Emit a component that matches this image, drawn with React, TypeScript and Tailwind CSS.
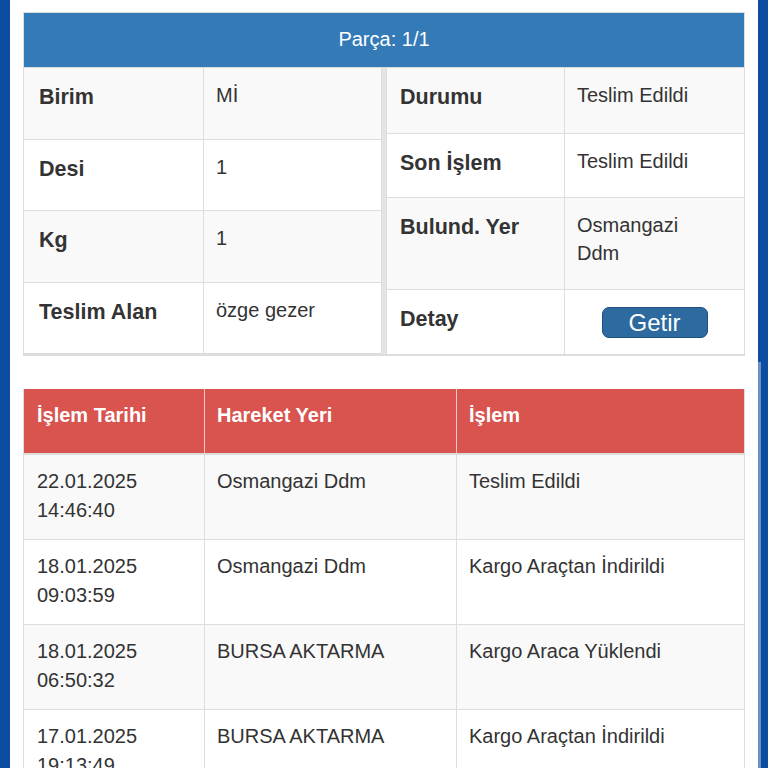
const info = {
  left: [
    { label: "Birim", value: "Mİ", h: "h-[72px]" },
    { label: "Desi", value: "1", h: "h-[71px]" },
    { label: "Kg", value: "1", h: "h-[72px]" },
    { label: "Teslim Alan", value: "özge gezer", h: "h-[71px]" },
  ],
  right: [
    { label: "Durumu", value: "Teslim Edildi", h: "h-[66px]" },
    { label: "Son İşlem", value: "Teslim Edildi", h: "h-[64px]" },
    { label: "Bulund. Yer", value: "Osmangazi Ddm", h: "h-[92px]" },
  ],
};

const history = [
  { date: "22.01.2025", time: "14:46:40", place: "Osmangazi Ddm", action: "Teslim Edildi" },
  { date: "18.01.2025", time: "09:03:59", place: "Osmangazi Ddm", action: "Kargo Araçtan İndirildi" },
  { date: "18.01.2025", time: "06:50:32", place: "BURSA AKTARMA", action: "Kargo Araca Yüklendi" },
  { date: "17.01.2025", time: "19:13:49", place: "BURSA AKTARMA", action: "Kargo Araçtan İndirildi" },
];

const InfoRow = ({
  label,
  children,
  h,
  striped,
  labelCls,
}: {
  label: string;
  children: React.ReactNode;
  h: string;
  striped: boolean;
  labelCls: string;
}) => (
  <div className={`flex border-b border-[#ddd] ${h} ${striped ? "bg-[#f9f9f9]" : "bg-white"}`}>
    <div className={`${labelCls} shrink-0 border-r border-[#ddd] pt-[14px] text-[21.5px] font-bold leading-[30px]`}>
      {label}
    </div>
    <div className="flex-1 pl-[12px] pr-3 pt-[13px] text-[20px] leading-[28px]">{children}</div>
  </div>
);

const App = () => {
  return (
    <div
      className="flex min-h-screen bg-white text-[#333]"
      style={{ fontFamily: '"Liberation Sans", Arial, sans-serif' }}
    >
      <div className="w-[10px] shrink-0 bg-[#0b4d9e]" />

      <main className="flex-1 px-[13px] pt-[12px]">
        {/* parça bilgileri */}
        <section className="border border-b-2 border-[#ddd]">
          <div className="flex h-[55px] items-center justify-center border-b border-[#ddd] bg-[#337ab7] pb-[2px] text-[20px] text-white">
            Parça: 1/1
          </div>
          <div className="flex gap-[4px] bg-[#e4e4e4]">
            <div className="flex-1 border-r border-[#ddd]">
              {info.left.map((r, i) => (
                <InfoRow key={r.label} label={r.label} h={r.h} striped={i % 2 === 0} labelCls="w-[180px] pl-[15px]">
                  {r.value}
                </InfoRow>
              ))}
            </div>
            <div className="flex-1 border-l border-[#ddd]">
              {info.right.map((r, i) => (
                <InfoRow key={r.label} label={r.label} h={r.h} striped={i % 2 === 0} labelCls="w-[178px] pl-[13px]">
                  {r.label === "Bulund. Yer" ? (
                    <>
                      Osmangazi
                      <br />
                      Ddm
                    </>
                  ) : (
                    r.value
                  )}
                </InfoRow>
              ))}
              <div className="flex h-[64px] bg-white">
                <div className="w-[178px] shrink-0 border-r border-[#ddd] pl-[13px] pt-[14px] text-[21.5px] font-bold leading-[30px]">
                  Detay
                </div>
                <div className="flex flex-1 justify-center pt-[17px]">
                  <button className="flex h-[31px] w-[106px] items-center justify-center rounded-[7px] border border-[#1f4f7e] bg-[#2c6aa0] text-[24px] leading-none text-white">
                    Getir
                  </button>
                </div>
              </div>
            </div>
          </div>
        </section>

        {/* hareketler */}
        <section className="mt-[33px] grid grid-cols-[182px_252px_1fr]">
          <div className="h-[66px] border-b-2 border-l border-r border-[#ddd] border-r-[#f3c9c8] bg-[#d9534f] pl-[13px] pt-[12px] text-[20px] font-bold leading-[29px] text-white">
            İşlem Tarihi
          </div>
          <div className="h-[66px] border-b-2 border-r border-[#ddd] border-r-[#f3c9c8] bg-[#d9534f] pl-[12px] pt-[12px] text-[20px] font-bold leading-[29px] text-white">
            Hareket Yeri
          </div>
          <div className="h-[66px] border-b-2 border-r border-[#ddd] bg-[#d9534f] pl-[12px] pt-[12px] text-[20px] font-bold leading-[29px] text-white">
            İşlem
          </div>

          {history.map((h, i) => {
            const bg = i % 2 === 0 ? "bg-[#f9f9f9]" : "bg-white";
            return (
              <div key={i} className="contents">
                <div className={`h-[85px] border-b border-l border-r border-[#ddd] pl-[13px] pt-[12px] text-[20px] leading-[29px] ${bg}`}>
                  {h.date}
                  <br />
                  {h.time}
                </div>
                <div className={`h-[85px] border-b border-r border-[#ddd] pl-[12px] pt-[12px] text-[20px] leading-[29px] ${bg}`}>
                  {h.place}
                </div>
                <div className={`h-[85px] border-b border-r border-[#ddd] pl-[12px] pt-[12px] text-[20px] leading-[29px] ${bg}`}>
                  {h.action}
                </div>
              </div>
            );
          })}
        </section>
      </main>

      <div className="flex w-[10px] shrink-0 bg-[#0b4d9e]">
        <div className="mt-[362px] w-[3px] bg-[#6c90c4]" />
      </div>
    </div>
  );
};

export default App;
